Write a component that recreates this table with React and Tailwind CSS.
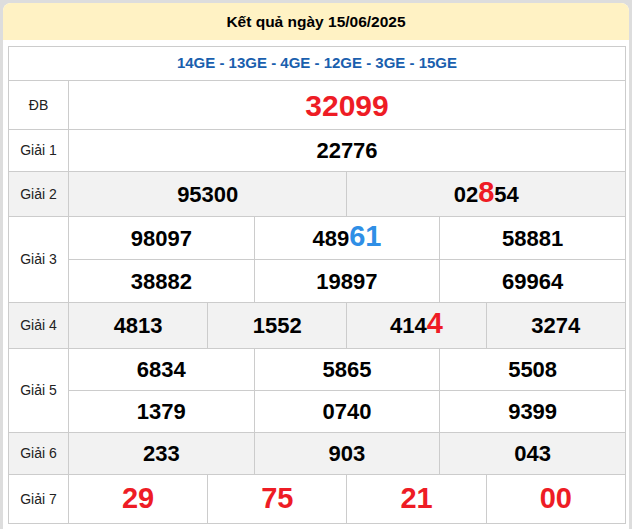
const CELL = "border border-[#cccccc] p-0";
const LABEL = `${CELL} text-center text-[14px] text-[#222]`;
const NUM = `${CELL} text-center text-[22px] font-bold text-black`;
const RED = `${CELL} text-center text-[29px] font-bold text-[#ee1c25]`;

function Num({ value, hi = 0, color = "text-[#ee1c25]" }) {
  // hi: number of trailing digits drawn big and coloured
  if (!hi) return <span>{value}</span>;
  const head = value.slice(0, value.length - hi);
  const tail = value.slice(value.length - hi);
  return (
    <span>
      {head}
      <span className={`text-[29px] leading-none ${color}`}>{tail}</span>
    </span>
  );
}

export default function App() {
  return (
    <div className="min-h-screen bg-[#dddddd] pt-[3px] pl-[3px]" style={{ fontFamily: '"Liberation Sans", Arial, sans-serif' }}>
      <div className="w-[626px] bg-white rounded-t-lg pb-[6px]">
        {/* Header */}
        <div className="h-[37px] bg-[#fff2c4] rounded-t-lg flex items-center justify-center font-bold text-[15.5px] text-black">
          Kết quả ngày 15/06/2025
        </div>

        <div className="pt-[6px] pl-[5px]">
          <table className="w-[618px] border-collapse table-fixed">
            <colgroup>
              <col className="w-[60px]" />
              {Array.from({ length: 12 }).map((_, i) => (
                <col key={i} />
              ))}
            </colgroup>
            <tbody>
              <tr className="h-[34px]">
                <td colSpan={13} className={`${CELL} text-center text-[15px] font-bold text-[#1a5fae]`}>
                  14GE - 13GE - 4GE - 12GE - 3GE - 15GE
                </td>
              </tr>

              <tr className="h-[49px]">
                <td className={LABEL}>ĐB</td>
                <td colSpan={12} className={`${CELL} text-center text-[30px] font-bold text-[#ee1c25]`}>32099</td>
              </tr>

              <tr className="h-[42px]">
                <td className={LABEL}>Giải 1</td>
                <td colSpan={12} className={NUM}>22776</td>
              </tr>

              <tr className="h-[45px] bg-[#f2f2f2]">
                <td className={LABEL}>Giải 2</td>
                <td colSpan={6} className={NUM}>95300</td>
                <td colSpan={6} className={NUM}>
                  <Num value="028" hi={1} />
                  54
                </td>
              </tr>

              {/* Giải 3 */}
              <tr className="h-[43px]">
                <td rowSpan={2} className={LABEL}>Giải 3</td>
                <td colSpan={4} className={NUM}>98097</td>
                <td colSpan={4} className={NUM}>
                  <Num value="48961" hi={2} color="text-[#2f8fe6]" />
                </td>
                <td colSpan={4} className={NUM}>58881</td>
              </tr>
              <tr className="h-[43px]">
                <td colSpan={4} className={NUM}>38882</td>
                <td colSpan={4} className={NUM}>19897</td>
                <td colSpan={4} className={NUM}>69964</td>
              </tr>

              {/* Giải 4 */}
              <tr className="h-[46px] bg-[#f2f2f2]">
                <td className={LABEL}>Giải 4</td>
                <td colSpan={3} className={NUM}>4813</td>
                <td colSpan={3} className={NUM}>1552</td>
                <td colSpan={3} className={NUM}>
                  <Num value="4144" hi={1} />
                </td>
                <td colSpan={3} className={NUM}>3274</td>
              </tr>

              {/* Giải 5 */}
              <tr className="h-[42px]">
                <td rowSpan={2} className={LABEL}>Giải 5</td>
                <td colSpan={4} className={NUM}>6834</td>
                <td colSpan={4} className={NUM}>5865</td>
                <td colSpan={4} className={NUM}>5508</td>
              </tr>
              <tr className="h-[42px]">
                <td colSpan={4} className={NUM}>1379</td>
                <td colSpan={4} className={NUM}>0740</td>
                <td colSpan={4} className={NUM}>9399</td>
              </tr>

              {/* Giải 6 */}
              <tr className="h-[42px] bg-[#f2f2f2]">
                <td className={LABEL}>Giải 6</td>
                <td colSpan={4} className={NUM}>233</td>
                <td colSpan={4} className={NUM}>903</td>
                <td colSpan={4} className={NUM}>043</td>
              </tr>

              {/* Giải 7 */}
              <tr className="h-[49px]">
                <td className={LABEL}>Giải 7</td>
                <td colSpan={3} className={RED}>29</td>
                <td colSpan={3} className={RED}>75</td>
                <td colSpan={3} className={RED}>21</td>
                <td colSpan={3} className={RED}>00</td>
              </tr>
            </tbody>
          </table>
        </div>
      </div>
    </div>
  );
}
